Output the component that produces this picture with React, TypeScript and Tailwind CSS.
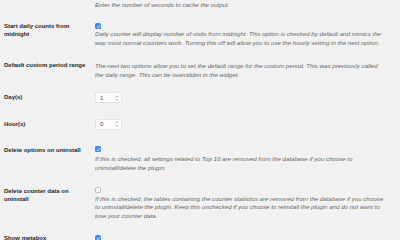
import React from "react";

function Check({ checked }: { checked: boolean }) {
  if (!checked)
    return <div className="w-[6px] h-[6px] rounded-[1.5px] bg-white border border-[#b4b9be]" />;
  return (
    <div className="w-[6px] h-[6px] rounded-[1.5px] bg-[#3d8ef0] flex items-center justify-center">
      <svg width="5" height="5" viewBox="0 0 10 10">
        <path d="M2 5.5 L4 7.5 L8 2.5" stroke="white" strokeWidth="1.8" fill="none" />
      </svg>
    </div>
  );
}

function Num({ v }: { v: string }) {
  return (
    <div className="w-[27px] h-[11px] bg-white border border-[#e2e2e2] rounded-[2px] flex items-center justify-between pl-[4px] pr-[2px]">
      <span className="text-[6px] leading-[6px] text-[#32373c]">{v}</span>
      <svg width="4" height="6" viewBox="0 0 4 6">
        <path d="M0.6 2.3 L2 0.8 L3.4 2.3" stroke="#999" strokeWidth="0.7" fill="none" />
        <path d="M0.6 3.7 L2 5.2 L3.4 3.7" stroke="#999" strokeWidth="0.7" fill="none" />
      </svg>
    </div>
  );
}

function Desc({ lines }: { lines: string[] }) {
  return (
    <div className="italic text-[6.15px] leading-[8.8px] text-[#666] whitespace-nowrap">
      {lines.map((l, i) => (
        <div key={i}>{l}</div>
      ))}
    </div>
  );
}

function Label({ lines }: { lines: string[] }) {
  return (
    <div className="w-[91px] shrink-0 font-bold text-[6px] leading-[7.8px] text-[#23282d]">
      {lines.map((l, i) => (
        <div key={i}>{l}</div>
      ))}
    </div>
  );
}

export default function App() {
  return (
    <div className="w-[400px] h-[240px] overflow-hidden bg-[#f1f1f1] pl-[4px] font-['Liberation_Sans',Arial,sans-serif]">
      <div className="flex pt-[0.6px]">
        <div className="w-[91px] shrink-0" />
        <Desc lines={["Enter the number of seconds to cache the output."]} />
      </div>

      <div className="flex mt-[13.5px]">
        <Label lines={["Start daily counts from", "midnight"]} />
        <div>
          <div className="mt-[0.5px] mb-[0.9px]"><Check checked /></div>
          <Desc
            lines={[
              "Daily counter will display number of visits from midnight. This option is checked by default and mimics the",
              "way most normal counters work. Turning this off will allow you to use the hourly setting in the next option.",
            ]}
          />
        </div>
      </div>

      <div className="flex mt-[14.5px]">
        <Label lines={["Default custom period range"]} />
        <Desc
          lines={[
            "The next two options allow you to set the default range for the custom period. This was previously called",
            "the daily range. This can be overridden in the widget.",
          ]}
        />
      </div>

      <div className="flex items-center mt-[12.5px]">
        <Label lines={["Day(s)"]} />
        <Num v="1" />
      </div>

      <div className="flex items-center mt-[15.5px]">
        <Label lines={["Hour(s)"]} />
        <Num v="0" />
      </div>

      <div className="flex mt-[16.5px]">
        <div className="pt-[0.8px]"><Label lines={["Delete options on uninstall"]} /></div>
        <div>
          <div className="mb-[2.5px]"><Check checked /></div>
          <Desc
            lines={[
              "If this is checked, all settings related to Top 10 are removed from the database if you choose to",
              "uninstall/delete the plugin.",
            ]}
          />
        </div>
      </div>

      <div className="flex mt-[14.5px]">
        <div className="pt-[1px]"><Label lines={["Delete counter data on", "uninstall"]} /></div>
        <div>
          <div className="mb-[1.5px]"><Check checked={false} /></div>
          <Desc
            lines={[
              "If this is checked, the tables containing the counter statistics are removed from the database if you choose",
              "to uninstall/delete the plugin. Keep this unchecked if you choose to reinstall the plugin and do not want to",
              "lose your counter data.",
            ]}
          />
        </div>
      </div>

      <div className="flex mt-[14.5px]">
        <div className="pt-[0px]"><Label lines={["Show metabox"]} /></div>
        <Check checked />
      </div>
    </div>
  );
}
